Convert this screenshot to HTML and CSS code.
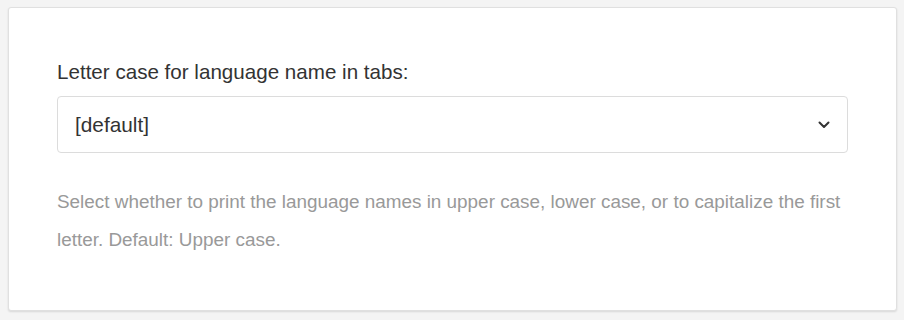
FILE: index.html
```html
<!DOCTYPE html>
<html>
<head>
<meta charset="utf-8">
<link rel="stylesheet" href="styles.css">
</head>
<body>
<div class="card">
  <label class="label" for="case">Letter case for language name in tabs:</label>
  <div class="select">
    <span class="value">[default]</span>
    <svg class="chev" width="12" height="8" viewBox="0 0 12 8"><path d="M1.5 1.5 L6 6 L10.5 1.5" fill="none" stroke="#333" stroke-width="2" stroke-linecap="round" stroke-linejoin="round"/></svg>
  </div>
  <p class="help">Select whether to print the language names in upper case, lower case, or to capitalize the first letter. Default: Upper case.</p>
</div>
</body>
</html>
```
FILE: styles.css
```css
html, body { margin: 0; padding: 0; }
body {
  background: #f4f4f4;
  font-family: "Liberation Sans", Arial, sans-serif;
  width: 904px;
  height: 320px;
  padding: 7px 7px 0 8px;
  box-sizing: border-box;
}
.card {
  background: #fff;
  border: 1px solid #e0e0e0;
  border-radius: 3px;
  box-shadow: 0 1px 2px rgba(0,0,0,0.12);
  height: 304px;
  box-sizing: border-box;
  padding: 50px 48px 0 48px;
}
.label {
  display: block;
  font-size: 20.6px;
  color: #333;
  line-height: 28px;
  margin-bottom: 10px;
}
.select {
  height: 57px;
  box-sizing: border-box;
  border: 1px solid #dcdcdc;
  border-radius: 4px;
  display: flex;
  align-items: center;
  justify-content: space-between;
  padding: 0 17px 0 17px;
}
.value { font-size: 20.8px; color: #333; }
.chev { display: block; }
.help {
  margin: 30px 0 0;
  font-size: 18.9px;
  line-height: 38px;
  color: #999;
}
```
